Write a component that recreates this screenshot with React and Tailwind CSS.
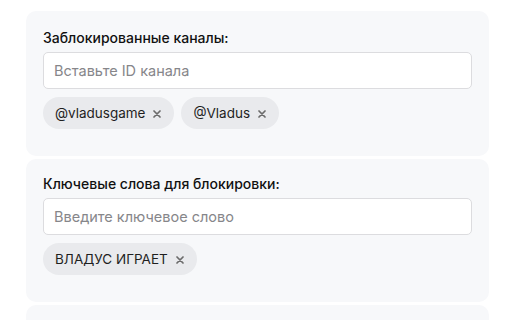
import React from "react";

function Chip({ label }) {
  return (
    <span className="inline-flex h-[32px] items-center gap-[8px] rounded-full bg-[#e9eaed] pl-[12px] pr-[13px] text-[13.5px] text-[#1f1f1f]">
      <span>{label}</span>
      <svg width="8" height="8" viewBox="0 0 8 8" className="mt-[1px]">
        <path d="M1 1L7 7M7 1L1 7" stroke="#6b6b6b" strokeWidth="1.7" strokeLinecap="round" />
      </svg>
    </span>
  );
}

function Card({ title, placeholder, chips, className }) {
  return (
    <div className={"rounded-[10px] bg-[#f7f8fa] px-[17px] pb-[27px] " + className}>
      <div className="text-[14px] font-medium leading-[20px] text-[#111]">{title}</div>
      <input
        className="mt-[4px] block h-[37px] w-full rounded-[5px] border border-[#dcdcdf] bg-white px-[10px] text-[14.5px] text-[#222] outline-none placeholder:text-[#86868a]"
        placeholder={placeholder}
      />
      <div className="mt-[8px] flex flex-wrap gap-[7px]">
        {chips.map((c) => (
          <Chip key={c} label={c} />
        ))}
      </div>
    </div>
  );
}

export default function App() {
  return (
    <div
      className="h-[320px] w-[512px] overflow-hidden bg-white pl-[26px] pr-[23px] pt-[11px]"
      style={{ fontFamily: 'Inter, "Liberation Sans", Arial, sans-serif' }}
    >
      <Card
        className="pt-[17px]"
        title="Заблокированные каналы:"
        placeholder="Вставьте ID канала"
        chips={["@vladusgame", "@Vladus"]}
      />
      <Card
        className="mt-[3px] pt-[15px]"
        title="Ключевые слова для блокировки:"
        placeholder="Введите ключевое слово"
        chips={["ВЛАДУС ИГРАЕТ"]}
      />
      <div className="mt-[3px] h-[40px] rounded-[10px] bg-[#f7f8fa]" />
    </div>
  );
}
